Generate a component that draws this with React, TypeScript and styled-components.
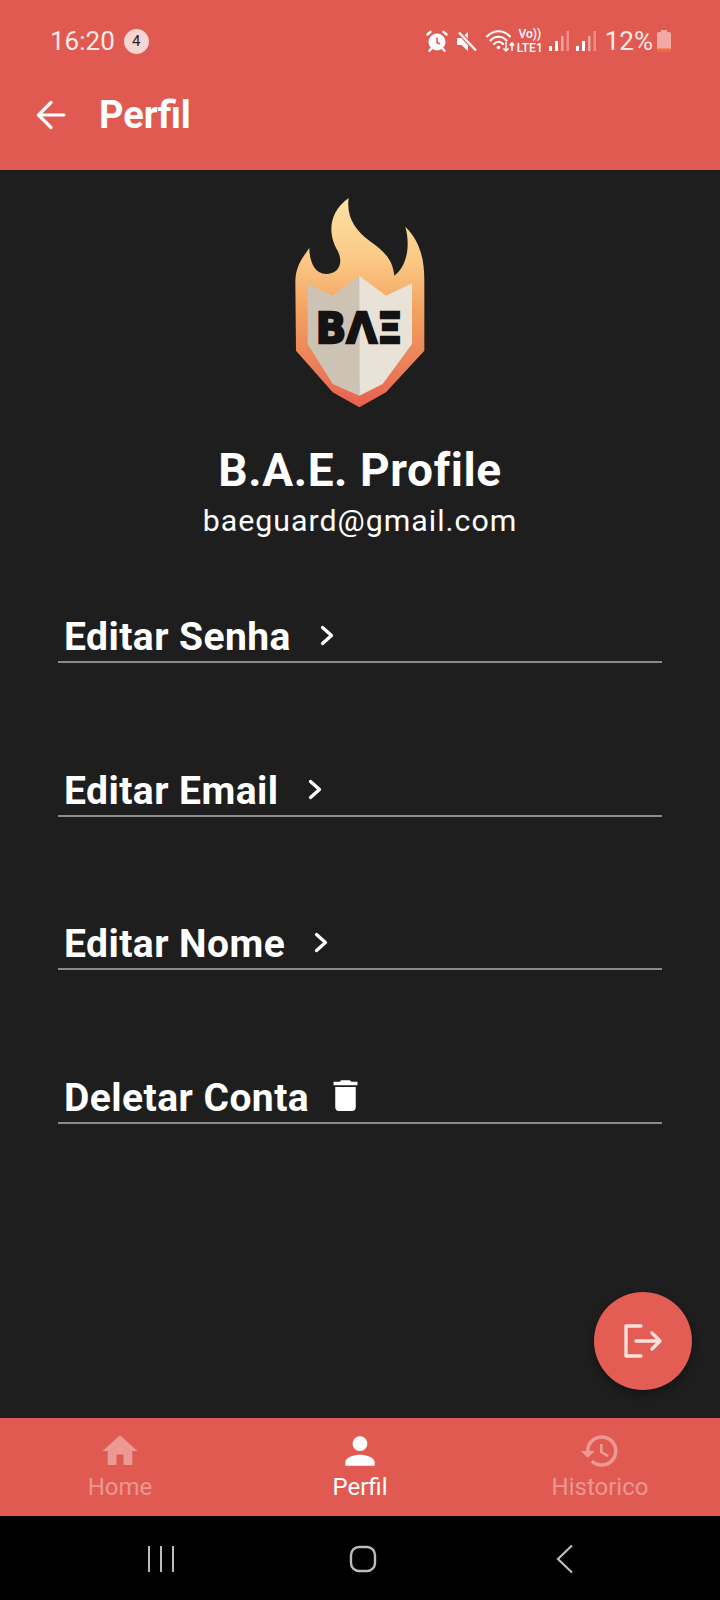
import React from "react";
import styled, { createGlobalStyle } from "styled-components";
import { MdHome, MdPerson, MdHistory, MdDelete } from "react-icons/md";

const Global = createGlobalStyle`
  html, body { margin: 0; padding: 0; background: #1e1e1e; }
  body { font-family: Roboto, "Liberation Sans", sans-serif; }
  * { box-sizing: border-box; }
`;

const Screen = styled.div`
  width: 720px;
  height: 1600px;
  display: flex;
  flex-direction: column;
  overflow: hidden;
  color: #fff;
`;

const Header = styled.header`
  height: 170px;
  flex: none;
  background: #e05a52;
  display: flex;
  flex-direction: column;
`;

const StatusBar = styled.div`
  height: 82px;
  padding: 0 49px 0 50px;
  display: flex;
  align-items: center;
  justify-content: space-between;
  color: #fde9e6;
`;

const StatusLeft = styled.div`
  display: flex;
  align-items: center;
  gap: 9px;
`;

const Time = styled.span`
  font-size: 26px;
  line-height: 30px;
`;

const Badge = styled.span`
  width: 25px;
  height: 25px;
  border-radius: 50%;
  background: #f6d5d2;
  color: #2b2222;
  font-size: 15px;
  display: flex;
  align-items: center;
  justify-content: center;
`;

const StatusRight = styled.div`
  display: flex;
  align-items: center;
  color: #fff;
`;

const VoLte = styled.span`
  display: flex;
  flex-direction: column;
  align-items: center;
  font-size: 12px;
  line-height: 14px;
  font-weight: 500;
  margin: 0 6px 0 1px;
`;

const SignalGap = styled.span`
  width: 7px;
`;

const Percent = styled.span`
  font-size: 26px;
  line-height: 30px;
  margin: 0 4px 0 9px;
  color: #fde9e6;
`;

const AppBar = styled.div`
  height: 72px;
  padding: 0 0 6px 36px;
  display: flex;
  align-items: center;
  gap: 33px;
`;

const Title = styled.h1`
  margin: 0;
  font-size: 38px;
  font-weight: 700;
  color: #fff;
`;

const Main = styled.main`
  position: relative;
  flex: 1;
  background: #1e1e1e;
  display: flex;
  flex-direction: column;
  align-items: center;
  padding-top: 28px;
`;

const LogoBox = styled.div`
  width: 132px;
  height: 210px;
  display: flex;
`;

const Name = styled.h2`
  margin: 36px 0 0;
  font-size: 46px;
  line-height: 52px;
  font-weight: 700;
  letter-spacing: 0.6px;
`;

const Email = styled.p`
  margin: 7px 0 0;
  font-size: 30.3px;
  line-height: 36px;
  letter-spacing: 1px;
  color: #fff;
`;

const Rows = styled.div`
  align-self: stretch;
  margin: 76px 58px 0 58px;
  display: flex;
  flex-direction: column;
  gap: 105.7px;
`;

const Row = styled.div`
  height: 48px;
  padding: 0 0 2px 6px;
  border-bottom: 2px solid #8a8a8a;
  display: flex;
  align-items: center;
`;

const RowLabel = styled.span`
  font-size: 39px;
  font-weight: 700;
  line-height: 44px;
  letter-spacing: 0.45px;
`;

const ChevronWrap = styled.span`
  display: flex;
  margin: -3px 0 0 29px;
`;

const TrashWrap = styled.span`
  display: flex;
  margin: -6px 0 0 16px;
`;

const Fab = styled.button`
  position: absolute;
  right: 28px;
  bottom: 126px;
  width: 98px;
  height: 98px;
  padding: 0;
  border: none;
  border-radius: 50%;
  background: #e35d54;
  box-shadow: 0 4px 10px rgba(0, 0, 0, 0.35);
  display: flex;
  align-items: center;
  justify-content: center;
`;

const BottomNav = styled.nav`
  position: relative;
  height: 98px;
  flex: none;
  margin-top: -98px;
  background: #e05a52;
  display: grid;
  grid-template-columns: repeat(3, 1fr);
`;

const Tab = styled.div<{ $active?: boolean }>`
  display: flex;
  flex-direction: column;
  align-items: center;
  padding-top: 15px;
  color: ${(p) => (p.$active ? "#ffffff" : "rgba(255,255,255,0.38)")};
`;

const TabIcon = styled.span`
  height: 36px;
  display: flex;
  align-items: center;
  justify-content: center;
`;

const TabLabel = styled.span`
  font-size: 24px;
  line-height: 30px;
  margin-top: 3px;
`;

const SystemBar = styled.div`
  height: 84px;
  flex: none;
  background: #000;
  display: grid;
  grid-template-columns: repeat(3, 1fr);
  align-items: center;
  justify-items: center;
`;

const SysIcon = styled.svg<{ $shift: number }>`
  display: block;
  transform: translate(${(p) => p.$shift}px, 1px);
`;

const Back = () => (
  <svg width="30" height="30" viewBox="0 0 30 30" fill="none" stroke="#fff" strokeWidth="3.2" strokeLinecap="round" strokeLinejoin="round">
    <path d="M28 15H3M15 2.500L2.500 15L15 27.500" />
  </svg>
);

const Alarm = () => (
  <svg width="22" height="22" viewBox="0 0 22 22">
    <circle cx="11" cy="12" r="8.500" fill="#fff" />
    <path d="M1.500 4.500L4.500 1.800M20.500 4.500L17.500 1.800M5 19L3.500 20.800M17 19L18.500 20.800" stroke="#fff" strokeWidth="2.400" fill="none" strokeLinecap="round" />
    <path d="M11 7.500V12.500L14 14" stroke="#e05a52" strokeWidth="1.600" fill="none" />
  </svg>
);

const Mute = () => (
  <svg width="21" height="21" viewBox="0 0 21 21" style={{ marginLeft: 8 }}>
    <path d="M1 7V14H5.500L12 20V1L5.500 7Z" fill="#fff" />
    <path d="M3 1.500L20 19.500" stroke="#e05a52" strokeWidth="4.500" />
    <path d="M3 1.500L20 19.500" stroke="#fff" strokeWidth="2.400" />
  </svg>
);

const Wifi = () => (
  <svg width="30" height="24" viewBox="0 0 30 24" fill="none" style={{ marginLeft: 9 }}>
    <path d="M1 7.500C7.500 0.500 17.500 0.500 24 7.500M4.500 11.500C9 6.500 16 6.500 20.500 11.500M8 15C10.500 12 14.500 12 17 15" stroke="#fff" strokeWidth="2" strokeLinecap="round" />
    <circle cx="12.500" cy="18.500" r="1.800" fill="#fff" />
    <path d="M20 13V22M17.500 19.500L20 22L22.500 19.500M26 22V14M23.800 16.500L26 14L28.200 16.500" stroke="#fff" strokeWidth="1.500" />
  </svg>
);

const Signal = () => (
  <svg width="20" height="22" viewBox="0 0 20 22" style={{ display: "block" }}>
    <rect x="0" y="16" width="3" height="5" fill="#fff" />
    <rect x="6" y="11" width="3" height="10" fill="#fff" />
    <rect x="12" y="6" width="2.500" height="15" fill="#f2a5a0" />
    <rect x="17.500" y="1" width="2.500" height="20" fill="#ee8f89" />
  </svg>
);

const Battery = () => (
  <svg width="14" height="22" viewBox="0 0 14 22">
    <rect x="4" y="0" width="6" height="3" fill="#f0a9a4" />
    <rect x="0" y="2" width="14" height="20" rx="2" fill="#f0a9a4" />
    <rect x="0" y="18.500" width="14" height="3.500" rx="1" fill="#f26a3c" />
  </svg>
);

const Chevron = () => (
  <svg width="14" height="21" viewBox="0 0 14 21" fill="none" stroke="#fff" strokeWidth="3.300" strokeLinecap="round" strokeLinejoin="round">
    <path d="M2.500 2.500L11.500 10.500L2.500 18.500" />
  </svg>
);

const Logout = () => (
  <svg width="38" height="34" viewBox="0 0 38 34" fill="none" stroke="#fbe3dc" strokeWidth="3.300" strokeLinecap="round" strokeLinejoin="round">
    <path d="M17 2H2V32H17M12 17H36M28 9L36 17L28 25" />
  </svg>
);

const Logo = () => (
  <svg width="132" height="210" viewBox="78 42 388 630">
    <defs>
      <linearGradient id="flame" x1="0" y1="0" x2="0" y2="1">
        <stop offset="0" stopColor="#fde2a6" />
        <stop offset="0.3" stopColor="#fbc884" />
        <stop offset="0.55" stopColor="#f3a05f" />
        <stop offset="0.8" stopColor="#ec7f5b" />
        <stop offset="1" stopColor="#e8604f" />
      </linearGradient>
    </defs>
    <path
      d="M270 670L190 625L80 500L78 290C80 240 105 215 120 192C120 230 135 270 170 270C205 270 225 240 205 200C180 160 170 90 238 42C230 100 260 140 300 170C350 205 370 230 375 275C410 250 425 190 408 128C450 170 465 220 465 290L465 500L350 625Z"
      fill="url(#flame)"
    />
    <path d="M115 300L190 335L270 275V635L190 600L115 480Z" fill="#cdc3b5" />
    <path d="M270 275L350 335L428 298V480L340 600L270 635Z" fill="#e8e3d6" />
    <text
      x="139"
      y="478"
      fontFamily="'DejaVu Sans', sans-serif"
      fontWeight="700"
      fontSize="128"
      textLength="260"
      lengthAdjust="spacingAndGlyphs"
      fill="#141212"
      stroke="#141212"
      strokeWidth="7"
    >
      BΛΞ
    </text>
  </svg>
);

export default function App() {
  return (
    <>
      <Global />
      <Screen>
        <Header>
          <StatusBar>
            <StatusLeft>
              <Time>16:20</Time>
              <Badge>4</Badge>
            </StatusLeft>
            <StatusRight>
              <Alarm />
              <Mute />
              <Wifi />
              <VoLte>
                <span>Vo))</span>
                <span>LTE1</span>
              </VoLte>
              <Signal />
              <SignalGap />
              <Signal />
              <Percent>12%</Percent>
              <Battery />
            </StatusRight>
          </StatusBar>
          <AppBar>
            <Back />
            <Title>Perfil</Title>
          </AppBar>
        </Header>
        <Main>
          <LogoBox>
            <Logo />
          </LogoBox>
          <Name>B.A.E. Profile</Name>
          <Email>baeguard@gmail.com</Email>
          <Rows>
            <Row>
              <RowLabel>Editar Senha</RowLabel>
              <ChevronWrap><Chevron /></ChevronWrap>
            </Row>
            <Row>
              <RowLabel>Editar Email</RowLabel>
              <ChevronWrap><Chevron /></ChevronWrap>
            </Row>
            <Row>
              <RowLabel>Editar Nome</RowLabel>
              <ChevronWrap><Chevron /></ChevronWrap>
            </Row>
            <Row>
              <RowLabel>Deletar Conta</RowLabel>
              <TrashWrap><MdDelete size={41} /></TrashWrap>
            </Row>
          </Rows>
          <Fab aria-label="Sair"><Logout /></Fab>
        </Main>
        <BottomNav>
          <Tab>
            <TabIcon><MdHome size={42} /></TabIcon>
            <TabLabel>Home</TabLabel>
          </Tab>
          <Tab $active>
            <TabIcon><MdPerson size={44} /></TabIcon>
            <TabLabel>Perfil</TabLabel>
          </Tab>
          <Tab>
            <TabIcon><MdHistory size={42} /></TabIcon>
            <TabLabel>Historico</TabLabel>
          </Tab>
        </BottomNav>
        <SystemBar>
          <SysIcon $shift={41} width="26" height="28" viewBox="0 0 26 28" stroke="#bdbdbd" strokeWidth="2" fill="none">
            <path d="M1 1V27M13 1V27M25 1V27" />
          </SysIcon>
          <SysIcon $shift={3} width="28" height="28" viewBox="0 0 28 28" stroke="#bdbdbd" strokeWidth="2.400" fill="none">
            <rect x="2" y="2" width="24" height="24" rx="8" />
          </SysIcon>
          <SysIcon $shift={-35} width="18" height="30" viewBox="0 0 18 30" stroke="#bdbdbd" strokeWidth="2.200" fill="none">
            <path d="M16 1.500L2 15L16 28.500" />
          </SysIcon>
        </SystemBar>
      </Screen>
    </>
  );
}
